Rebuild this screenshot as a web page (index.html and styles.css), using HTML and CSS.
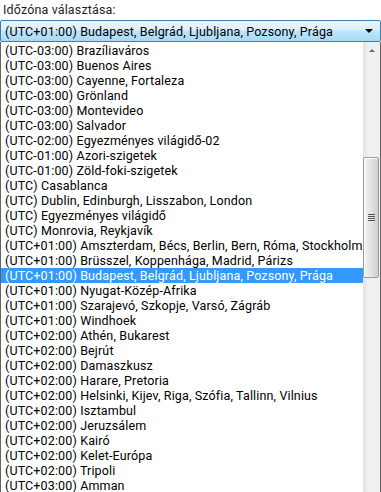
FILE: index.html
```html
<!DOCTYPE html>
<html>
<head>
<meta charset="utf-8">
<link rel="stylesheet" href="styles.css">
</head>
<body>
<div class="label">Időzóna választása:</div>
<div class="combo">
  <span class="combo-text">(UTC+01:00) Budapest, Belgrád, Ljubljana, Pozsony, Prága</span>
  <span class="combo-arrow"></span>
</div>
<div class="dropdown">
  <ul class="list">
    <li>(UTC-03:00) Brazíliaváros</li>
    <li>(UTC-03:00) Buenos Aires</li>
    <li>(UTC-03:00) Cayenne, Fortaleza</li>
    <li>(UTC-03:00) Grönland</li>
    <li>(UTC-03:00) Montevideo</li>
    <li>(UTC-03:00) Salvador</li>
    <li>(UTC-02:00) Egyezményes világidő-02</li>
    <li>(UTC-01:00) Azori-szigetek</li>
    <li>(UTC-01:00) Zöld-foki-szigetek</li>
    <li>(UTC) Casablanca</li>
    <li>(UTC) Dublin, Edinburgh, Lisszabon, London</li>
    <li>(UTC) Egyezményes világidő</li>
    <li>(UTC) Monrovia, Reykjavík</li>
    <li>(UTC+01:00) Amszterdam, Bécs, Berlin, Bern, Róma, Stockholm</li>
    <li>(UTC+01:00) Brüsszel, Koppenhága, Madrid, Párizs</li>
    <li class="selected">(UTC+01:00) Budapest, Belgrád, Ljubljana, Pozsony, Prága</li>
    <li>(UTC+01:00) Nyugat-Közép-Afrika</li>
    <li>(UTC+01:00) Szarajevó, Szkopje, Varsó, Zágráb</li>
    <li>(UTC+01:00) Windhoek</li>
    <li>(UTC+02:00) Athén, Bukarest</li>
    <li>(UTC+02:00) Bejrút</li>
    <li>(UTC+02:00) Damaszkusz</li>
    <li>(UTC+02:00) Harare, Pretoria</li>
    <li>(UTC+02:00) Helsinki, Kijev, Riga, Szófia, Tallinn, Vilnius</li>
    <li>(UTC+02:00) Isztambul</li>
    <li>(UTC+02:00) Jeruzsálem</li>
    <li>(UTC+02:00) Kairó</li>
    <li>(UTC+02:00) Kelet-Európa</li>
    <li>(UTC+02:00) Tripoli</li>
    <li>(UTC+03:00) Amman</li>
  </ul>
  <div class="scrollbar">
    <div class="sb-btn"><span class="tri-up"></span></div>
    <div class="sb-track">
      <div class="sb-thumb"><span class="grip"></span></div>
    </div>
    <div class="sb-btn"><span class="tri-down"></span></div>
  </div>
</div>
</body>
</html>
```
FILE: styles.css
```css
html, body {
  margin: 0;
  padding: 0;
  background: #fff;
  overflow: hidden;
}
body {
  font-family: Roboto, "Liberation Sans", sans-serif;
  font-size: 12.5px;
  letter-spacing: 0.14px;
  color: #000;
  width: 381px;
  height: 492px;
}
.label {
  height: 15px;
  line-height: 15px;
  padding: 2px 0 0 3px;
  color: #1e1e1e;
}
.combo {
  margin-top: 3px;
  border: 1px solid #3c7fb1;
  border-radius: 2px;
  background: linear-gradient(#eaf6fd 0%, #d9f0fc 45%, #bee6fd 50%, #a7d9f5 100%);
  display: flex;
  align-items: center;
  justify-content: space-between;
  padding: 0 6px 0 4px;
  box-sizing: border-box;
  height: 22px;
}
.combo-text {
  white-space: nowrap;
  line-height: 15px;
}
.combo-arrow {
  width: 0;
  height: 0;
  border-left: 4px solid transparent;
  border-right: 4px solid transparent;
  border-top: 4px solid #000;
  margin-right: 1px;
}
.dropdown {
  display: flex;
  border: 1px solid #646464;
  border-top: none;
  height: 460px;
}
.list {
  list-style: none;
  margin: 0;
  padding: 1px 0 0 0;
  flex: 1;
}
.list li {
  height: 15px;
  line-height: 15px;
  padding-left: 4px;
  white-space: nowrap;
  overflow: hidden;
}
.list li.selected {
  background: #3399ff;
  color: #fff;
}
.scrollbar {
  width: 17px;
  display: flex;
  flex-direction: column;
  background: linear-gradient(90deg, #e3e3e3, #f0f0f0 30%, #f0f0f0);
}
.sb-btn {
  height: 17px;
  display: flex;
  align-items: center;
  justify-content: center;
}
.tri-up {
  width: 0;
  height: 0;
  border-left: 3px solid transparent;
  border-right: 3px solid transparent;
  border-bottom: 3px solid #6a6a6a;
}
.tri-down {
  width: 0;
  height: 0;
  border-left: 4px solid transparent;
  border-right: 4px solid transparent;
  border-top: 4px solid #3a3a3a;
}
.sb-track {
  flex: 1;
  padding-top: 98px;
}
.sb-thumb {
  height: 121px;
  margin: 0 1px 0 0;
  border: 1px solid #9b9b9b;
  border-radius: 2px;
  box-sizing: border-box;
  background: linear-gradient(90deg, #f2f2f2, #e4e4e4 50%, #cfcfcf);
  box-shadow: inset 1px 1px 0 #fff;
  display: flex;
  align-items: center;
  justify-content: center;
}
.grip {
  width: 7px;
  height: 7px;
  background: repeating-linear-gradient(#555 0 1px, transparent 1px 2px);
}
```
